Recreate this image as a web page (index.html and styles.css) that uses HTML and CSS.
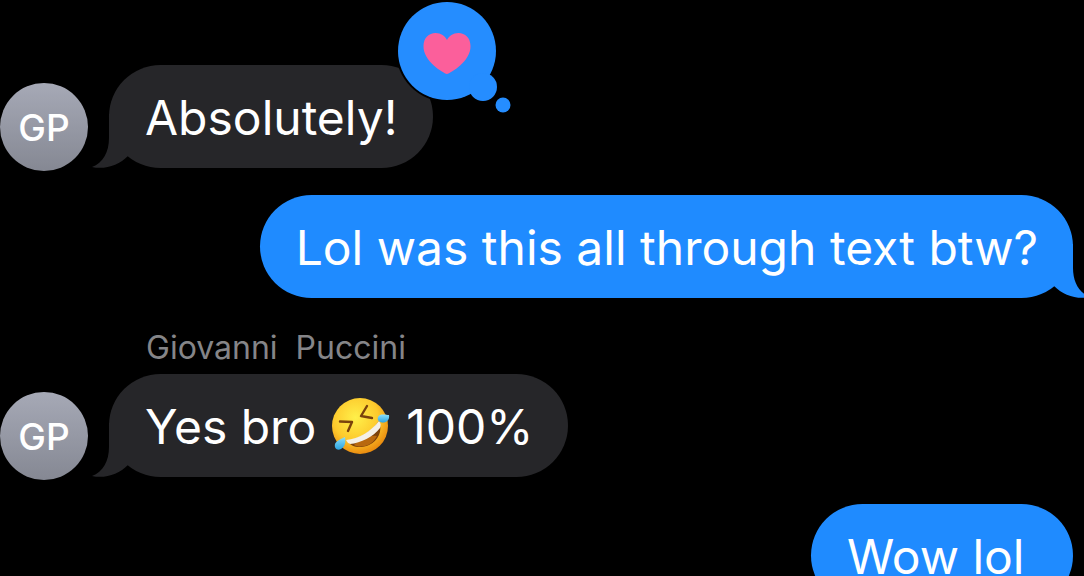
FILE: index.html
```html
<!DOCTYPE html>
<html lang="en">
<head>
    <meta charset="UTF-8">
    <meta name="viewport" content="width=device-width, initial-scale=1.0">
    <title>Messages</title>
    <link rel="stylesheet" href="styles.css">
</head>
<body>
    <!-- shared bubble tail, flipped in CSS for sent messages -->
    <svg class="defs" width="0" height="0" aria-hidden="true">
        <symbol id="tail" viewBox="0 0 36 54">
            <path d="M17 0V24C17 38 11 49 0 53C13 56 27 51 36 42V0Z"/>
        </symbol>
    </svg>

    <main class="chat">
        <div class="message received">
            <div class="avatar">GP</div>
            <div class="bubble">
                <svg class="tail" aria-hidden="true"><use href="#tail"/></svg>
                <span class="text">Absolutely!</span>
                <svg class="reaction" viewBox="0 0 120 120" role="img" aria-label="Loved">
                    <circle cx="52" cy="53" r="51" fill="#000"/>
                    <g fill="#258dff">
                        <circle cx="52" cy="53" r="49"/>
                        <circle cx="88" cy="89" r="14"/>
                        <circle cx="108" cy="107" r="7.5"/>
                    </g>
                    <path fill="#fb5f9b" d="M52 76C48 75 28 63 28.500 48C28.500 40 34 35 40.500 35C46 35 50 38 52 42C54 38 58 35 63.500 35C70 35 75.500 40 75.500 48C76 63 56 75 52 76Z"/>
                </svg>
            </div>
        </div>

        <div class="message sent">
            <div class="bubble">
                <svg class="tail" aria-hidden="true"><use href="#tail"/></svg>
                <span class="text">Lol was this all through text btw?</span>
            </div>
        </div>

        <div class="sender">Giovanni&nbsp; Puccini</div>
        <div class="message received">
            <div class="avatar">GP</div>
            <div class="bubble">
                <svg class="tail" aria-hidden="true"><use href="#tail"/></svg>
                <span class="text">Yes bro</span>
                <svg class="emoji" viewBox="0 0 60 60" role="img" aria-label="Rolling on the floor laughing">
                    <defs>
                        <radialGradient id="face" cx="0.42" cy="0.35" r="0.68">
                            <stop offset="0" stop-color="#fff04a"/>
                            <stop offset="0.6" stop-color="#fdc92c"/>
                            <stop offset="1" stop-color="#e8860d"/>
                        </radialGradient>
                        <linearGradient id="tear" x1="0" y1="0" x2="0" y2="1">
                            <stop offset="0" stop-color="#8be0fb"/>
                            <stop offset="1" stop-color="#2ba3e0"/>
                        </linearGradient>
                    </defs>
                    <circle cx="29" cy="29" r="28" fill="url(#face)"/>
                    <path d="M16 44C28 42 40 35 48 24C52 34 47 44 38 48C29 52 20 50 16 44Z" fill="#7b420c"/>
                    <path d="M23 48C27 43 37 38 46 39C43 44 41 46 37 48C32 50 27 50 23 48Z" fill="#b8680f"/>
                    <path d="M15 43C28 42 40 34 48 24C50 26 50 29 49 31C42 40 30 46 19 47C17 46 16 45 15 43Z" fill="#f4f0e8"/>
                    <path d="M9 24.500L21 25L17 34M36 9L30 19L41 21" fill="none" stroke="#7b420c" stroke-width="2.4" stroke-linecap="round" stroke-linejoin="round"/>
                    <path d="M47 20C49 16 55 18 58 18C59 23 55 26 51 25.500C48 25 46 23 47 20Z" fill="url(#tear)"/>
                    <path d="M14 40C15 45 14 50 10 52C6 54 3 51 4 47C5 44 10 42 14 40Z" fill="url(#tear)"/>
                </svg>
                <span class="text">100%</span>
            </div>
        </div>

        <div class="message sent">
            <div class="bubble">
                <span class="text">Wow lol&nbsp;</span>
            </div>
        </div>
    </main>
</body>
</html>
```
FILE: styles.css
```css
body {
    margin: 0;
    background: #000;
    color: #fff;
    font-family: Inter, "Liberation Sans", sans-serif;
    overflow: hidden;
}
.defs {
    position: absolute;
}
.chat {
    display: flex;
    flex-direction: column;
    padding-top: 65px;
}
.message {
    display: flex;
    align-items: flex-end;
    margin-bottom: 27px;
}
.sent {
    justify-content: flex-end;
    padding-right: 11px;
}
.received {
    gap: 21px;
}
.avatar {
    display: flex;
    align-items: center;
    justify-content: center;
    width: 88px;
    height: 88px;
    margin-bottom: -3px;
    border-radius: 50%;
    background: linear-gradient(#a6a9b6, #858893);
    font-size: 37px;
    font-weight: 500;
}
.bubble {
    position: relative;
    display: flex;
    align-items: center;
    gap: 15px;
    padding: 22px 35px 19px 36px;
    border-radius: 52px;
    font-size: 48px;
    line-height: 62px;
    white-space: nowrap;
}
.received .bubble {
    background: #262629;
}
.sent .bubble {
    background: #1f8bff;
}
.tail {
    position: absolute;
    bottom: 0;
    left: -17px;
    width: 36px;
    height: 54px;
    fill: #262629;
}
.sent .tail {
    left: auto;
    right: -17px;
    fill: #1f8bff;
    transform: scaleX(-1);
}
.text {
    position: relative;
}
.reaction {
    position: absolute;
    top: -67px;
    left: calc(100% - 38px);
    width: 120px;
    height: 120px;
}
.emoji {
    width: 60px;
    height: 60px;
}
.sender {
    padding-left: 146px;
    margin-bottom: 3px;
    color: #858588;
    font-size: 32px;
    line-height: 46px;
}
```
